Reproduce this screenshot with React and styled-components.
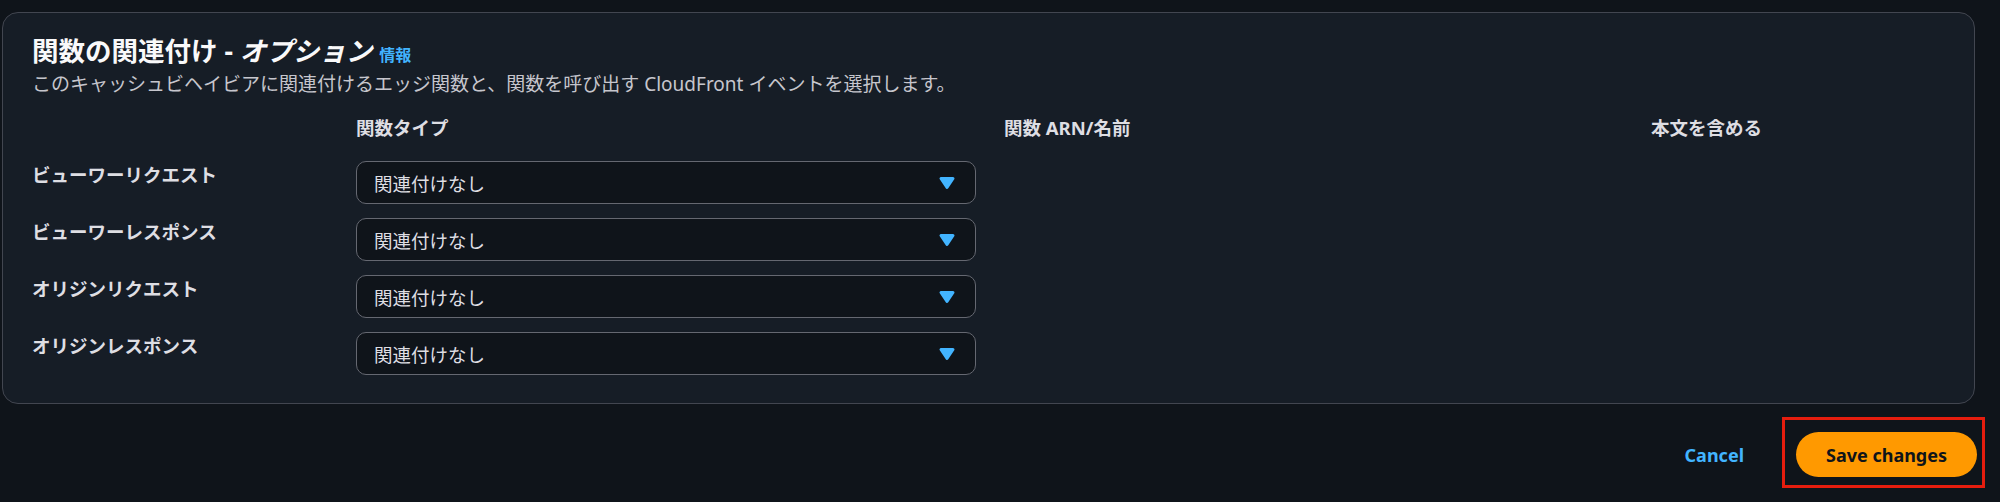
import styled, { createGlobalStyle } from 'styled-components';

const GlobalStyle = createGlobalStyle`
    html, body {
        margin: 0;
        padding: 0;
        background: #0f141a;
    }
    body {
        font-family: "Noto Sans", "Noto Sans CJK JP", sans-serif;
        color: #dedee3;
    }
`;

const Page = styled.div`
    width: 2000px;
    height: 502px;
    padding-top: 12px;
    box-sizing: border-box;
`;

const Panel = styled.section`
    margin-left: 2px;
    width: 1973px;
    height: 392px;
    box-sizing: border-box;
    background: #161d26;
    border: 1px solid #424650;
    border-radius: 16px;
    padding: 20px 30px 0 29px;
`;

const Header = styled.header`
    display: flex;
    flex-direction: column;
    gap: 2px;
`;

const TitleRow = styled.div`
    display: flex;
    align-items: baseline;
    gap: 7px;
`;

const Title = styled.h2`
    margin: 0;
    font-size: 26.5px;
    line-height: 36px;
    font-weight: 700;
    color: #f9f9fa;

    em {
        font-style: italic;
    }
`;

const InfoLink = styled.a`
    font-size: 16px;
    font-weight: 700;
    color: #42b4ff;
    text-decoration: none;
`;

const Description = styled.p`
    margin: 0;
    font-size: 19px;
    line-height: 26px;
    color: #c6c6cd;
`;

const Grid = styled.div`
    display: grid;
    grid-template-columns: 296px 620px 619px 1fr;
    column-gap: 28px;
    row-gap: 14px;
    margin-top: 18px;
`;

const ColumnHead = styled.div`
    grid-column: ${({ col }) => col};
    font-size: 18.5px;
    font-weight: 700;
    line-height: 26px;
    color: #dedee3;
    margin-bottom: 6px;
`;

const RowLabel = styled.div`
    grid-column: 1;
    font-size: 18.5px;
    font-weight: 700;
    line-height: 26px;
    padding-top: 1px;
    color: #dedee3;
`;

const Select = styled.button`
    grid-column: 2;
    height: 43px;
    display: flex;
    align-items: center;
    justify-content: space-between;
    padding: 0 16px 0 17px;
    background: #0f141a;
    border: 1px solid #656871;
    border-radius: 10px;
    font-family: "Noto Sans", "Noto Sans CJK JP", sans-serif;
    font-size: 18.5px;
    color: #dedee3;
    cursor: pointer;
`;

const Footer = styled.footer`
    display: flex;
    justify-content: flex-end;
    align-items: center;
    gap: 52px;
    padding: 28px 23px 0 0;
`;

const LinkButton = styled.button`
    background: none;
    border: none;
    padding: 0;
    font-family: "Noto Sans", sans-serif;
    font-size: 18px;
    font-weight: 700;
    color: #42b4ff;
    cursor: pointer;
`;

// the red box is an annotation drawn over the button
const Highlight = styled.div`
    position: relative;

    &::after {
        content: "";
        position: absolute;
        top: -15px;
        right: -8px;
        bottom: -11px;
        left: -14px;
        border: 3px solid #e51d0e;
        pointer-events: none;
    }
`;

const PrimaryButton = styled.button`
    height: 45px;
    width: 181px;
    border: none;
    border-radius: 23px;
    background: #ff9900;
    color: #0f141a;
    font-family: "Noto Sans", sans-serif;
    font-size: 18px;
    font-weight: 700;
    cursor: pointer;
`;

function Caret() {
    return (
        <svg width="24" height="24" viewBox="0 0 16 16" aria-hidden="true">
            <path
                d="M4 5h8l-4 6-4-6z"
                fill="#42b4ff"
                stroke="#42b4ff"
                strokeWidth="2"
                strokeLinejoin="round"
            />
        </svg>
    );
}

const events = ['ビューワーリクエスト', 'ビューワーレスポンス', 'オリジンリクエスト', 'オリジンレスポンス'];

export default function App() {
    return (
        <Page>
            <GlobalStyle />
            <Panel>
                <Header>
                    <TitleRow>
                        <Title>関数の関連付け - <em>オプション</em></Title>
                        <InfoLink href="#">情報</InfoLink>
                    </TitleRow>
                    <Description>
                        このキャッシュビヘイビアに関連付けるエッジ関数と、関数を呼び出す CloudFront イベントを選択します。
                    </Description>
                </Header>
                <Grid>
                    <ColumnHead col={2}>関数タイプ</ColumnHead>
                    <ColumnHead col={3}>関数 ARN/名前</ColumnHead>
                    <ColumnHead col={4}>本文を含める</ColumnHead>
                    {events.map((name) => [
                        <RowLabel key={name}>{name}</RowLabel>,
                        <Select key={name + '-select'}>
                            <span>関連付けなし</span>
                            <Caret />
                        </Select>,
                    ])}
                </Grid>
            </Panel>
            <Footer>
                <LinkButton>Cancel</LinkButton>
                <Highlight>
                    <PrimaryButton>Save changes</PrimaryButton>
                </Highlight>
            </Footer>
        </Page>
    );
}
